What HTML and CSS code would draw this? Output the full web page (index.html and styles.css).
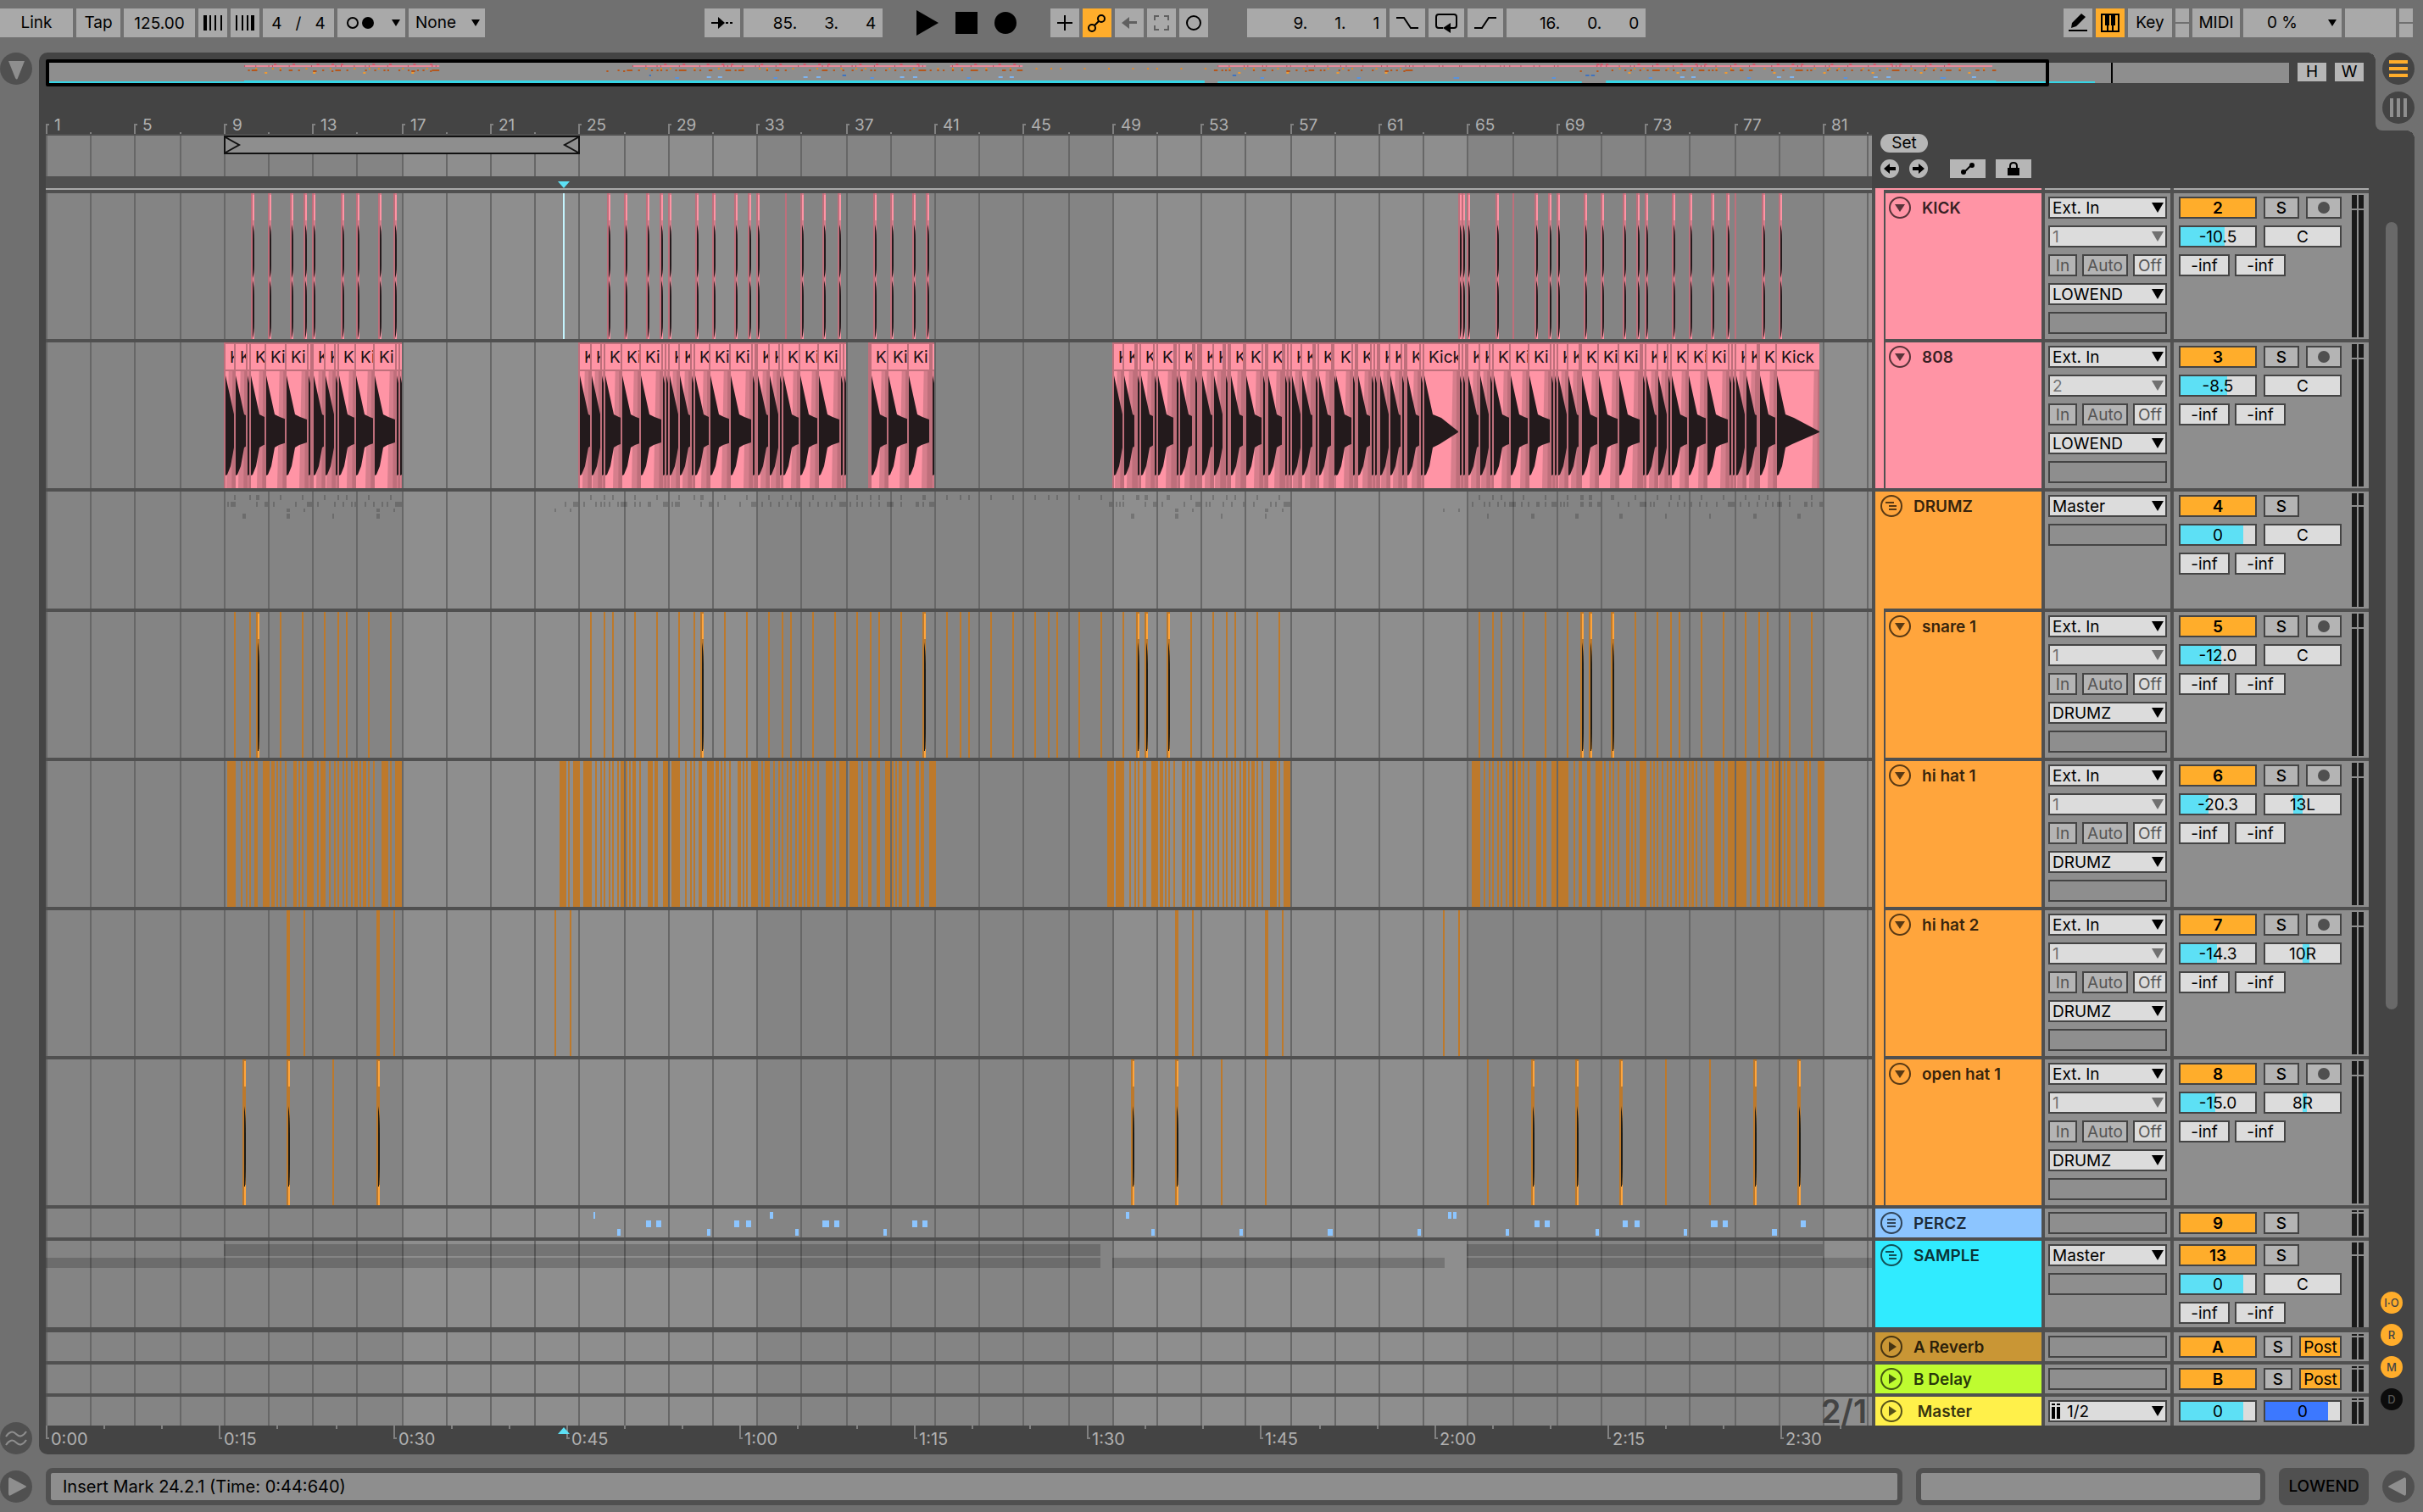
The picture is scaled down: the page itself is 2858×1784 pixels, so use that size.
FILE: index.html
```html
<!DOCTYPE html>
<html lang="en">
<head>
    <meta charset="UTF-8">
    <title>Arrangement</title>
    <link rel="stylesheet" href="styles.css">
</head>
<body>
    <header class="toolbar">
        <div class="group">
            <button class="btn w86">Link</button>
            <button class="btn w52">Tap</button>
            <input class="btn w84" value="125.00" aria-label="Tempo">
            <button class="btn w34" aria-label="Nudge down"><svg width="24" height="18"><path d="M1 0h4v18H1zM8 0h2v18H8zM14 0h2v18h-2zM21 0h2v18h-2z"/></svg></button>
            <button class="btn w34" aria-label="Nudge up"><svg width="24" height="18"><path d="M1 0h2v18H1zM8 0h2v18H8zM14 0h2v18h-2zM19 0h4v18h-4z"/></svg></button>
            <input class="btn w84" value="4   /   4" aria-label="Time signature">
            <button class="btn w80 metro" aria-label="Metronome"><svg width="34" height="18"><circle cx="8" cy="9" r="6" fill="none" stroke="#000" stroke-width="2"/><circle cx="26" cy="9" r="7"/></svg><i class="arrow"></i></button>
            <span class="drop w90"><select class="btn" aria-label="Quantization"><option>None</option></select></span>
        </div>
        <div class="space-a"></div>
        <div class="group">
            <button class="btn w42" aria-label="Follow"><svg width="26" height="18"><path d="M0 8h8V2l8 7-8 7v-6H0zM17 8h3v2h-3zM22 8h3v2h-3z"/></svg></button>
            <input class="btn w164 pos" value="85.      3.      4" aria-label="Position">
        </div>
        <div class="group transport">
            <button aria-label="Play"><svg width="26" height="30"><path d="M0 0l26 15L0 30z"/></svg></button>
            <button aria-label="Stop"><svg width="26" height="26"><path d="M0 0h26v26H0z"/></svg></button>
            <button aria-label="Record"><svg width="26" height="26"><circle cx="13" cy="13" r="13"/></svg></button>
        </div>
        <div class="group">
            <button class="btn w34" aria-label="Overdub"><svg width="18" height="18"><path d="M8 0h2v8h8v2h-8v8H8v-8H0V8h8z"/></svg></button>
            <button class="btn w34 on" aria-label="Automation arm"><svg width="24" height="24" fill="none" stroke="#000" stroke-width="2"><circle cx="17" cy="7" r="4"/><circle cx="6" cy="18" r="4"/><path d="M9 15l5-5"/></svg></button>
            <button class="btn w34" aria-label="Re-enable automation"><svg width="18" height="16" fill="#606060"><path d="M0 8l9-7v5h9v3H9v6z"/></svg></button>
            <button class="btn w34" aria-label="Capture"><svg width="18" height="18" fill="none" stroke="#606060" stroke-width="2"><path d="M1 6V1h5M12 1h5v5M17 12v5h-5M6 17H1v-5"/></svg></button>
            <button class="btn w34" aria-label="Session record"><svg width="20" height="20"><circle cx="10" cy="10" r="8" fill="none" stroke="#000" stroke-width="2"/></svg></button>
        </div>
        <div class="group loop">
            <input class="btn w164 pos" value="9.      1.      1" aria-label="Loop start">
            <button class="btn w42" aria-label="Punch in"><svg width="28" height="16" fill="none" stroke="#000" stroke-width="2"><path d="M1 2h9l8 12h9"/></svg></button>
            <button class="btn w42" aria-label="Loop"><svg width="28" height="24"><path d="M10 18H5q-3 0-3-3V5q0-3 3-3h18q3 0 3 3v10q0 3-3 3h-5" fill="none" stroke="#000" stroke-width="2"/><path d="M10 18l9-6v12z"/></svg></button>
            <button class="btn w42" aria-label="Punch out"><svg width="28" height="16" fill="none" stroke="#000" stroke-width="2"><path d="M1 14h9l8-12h9"/></svg></button>
            <input class="btn w164 pos" value="16.      0.      0" aria-label="Loop length">
        </div>
        <div class="space-b"></div>
        <div class="group">
            <button class="btn w34" aria-label="Draw mode"><svg width="24" height="22"><path d="M4 17l1-6L16 0l5 4L10 15zM1 19h22v2H1z"/></svg></button>
            <button class="btn w34 on" aria-label="Computer keyboard"><svg width="24" height="24"><path d="M2 2h20v20H2z" fill="none" stroke="#000" stroke-width="2"/><path d="M6 2h5v13H6zM13 2h5v13h-5zM8 14h2v8H8zM14 14h2v8h-2z"/></svg></button>
            <button class="btn w52">Key</button>
            <span class="leds"><i></i><i></i></span>
            <button class="btn w56">MIDI</button>
            <button class="btn w116 cpu">0 %<i class="arrow"></i></button>
            <span class="btn w60"></span>
            <span class="leds"><i></i><i></i></span>
        </div>
    </header>

    <main class="main">
        <nav class="rail">
            <button class="round" aria-label="Show browser"><svg width="38" height="38"><path d="M10 10h19l-8 20q-1 3-3 0z"/></svg></button>
            <button class="round" aria-label="Groove pool"><svg width="38" height="38" fill="none" stroke="#8e8e8e" stroke-width="2"><path d="M7 17q6-9 12-3t12-3M7 27q6-9 12-3t12-3"/></svg></button>
        </nav>

        <div class="workspace">
            <div class="arrange">
                <div class="overview-row">
                    <div class="overview">
                        <svg id="overview" viewBox="0 0 2646 24" preserveAspectRatio="none"></svg>
                        <div class="frame"></div>
                    </div>
                    <button class="small w34">H</button>
                    <button class="small w34">W</button>
                </div>

                <div class="head-row">
                    <div>
                        <div class="ruler" id="ruler"></div>
                        <div class="scrub lane" id="scrub">
                            <svg class="brace" viewBox="0 0 420 22" preserveAspectRatio="none"><path d="M1 1h418v20H1zM2 2l16 9-16 9M418 2l-16 9 16 9"/></svg>
                        </div>
                        <div class="marker-bar"><i class="marker"></i></div>
                    </div>
                    <div class="locators">
                        <button class="small set">Set</button>
                        <div class="locator-row">
                            <button class="small dot" aria-label="Previous locator"><svg width="16" height="14"><path d="M1 7l7-6v4h7v4H8v4z"/></svg></button>
                            <button class="small dot" aria-label="Next locator"><svg width="16" height="14"><path d="M15 7L8 1v4H1v4h7v4z"/></svg></button>
                            <button class="small w42" aria-label="Automation mode"><svg width="18" height="16"><path d="M5 12l8-8" stroke="#000" stroke-width="2"/><circle cx="4" cy="12" r="3"/><circle cx="14" cy="4" r="3"/></svg></button>
                            <button class="small w42" aria-label="Lock envelopes"><svg width="16" height="16"><path d="M1 7h14v9H1z"/><path d="M4 8V5q0-4 4-4t4 4v3" fill="none" stroke="#000" stroke-width="2"/></svg></button>
                        </div>
                    </div>
                </div>

                <div class="tracks" id="tracks">
                    <div class="track edge">
                        <div class="lane"></div>
                        <div class="edge-head"></div>
                        <div></div>
                        <div></div>
                    </div>
                </div>

                <div class="time-ruler" id="times"><i class="marker up"></i></div>
            </div>

            <aside class="side">
                <div class="thumb"></div>
                <div class="gap"></div>
                <button class="chip">I·O</button>
                <button class="chip">R</button>
                <button class="chip">M</button>
                <button class="chip off">D</button>
            </aside>

            <div class="tabs">
                <button class="round" aria-label="Arrangement view"><svg width="38" height="38" fill="#ffad2b"><path d="M8 9h22v4H8zM8 17h22v4H8zM8 25h22v4H8z"/></svg></button>
                <button class="round" aria-label="Session view"><svg width="38" height="38"><path d="M9 8h4v22H9zM17 8h4v22h-4zM25 8h4v22h-4z"/></svg></button>
            </div>
        </div>
    </main>

    <footer class="status">
        <button class="round" aria-label="Show info"><svg width="38" height="38"><path d="M10 11q0-4 3-2l17 9q2 1 0 2l-17 9q-3 2-3-2z"/></svg></button>
        <div class="info">Insert Mark 24.2.1 (Time: 0:44:640)</div>
        <div class="info clip-view"></div>
        <button class="device">LOWEND</button>
        <button class="round" aria-label="Show devices"><svg width="38" height="38"><path d="M28 11q0-4-3-2L8 18q-2 1 0 2l17 9q3 2 3-2z"/></svg></button>
    </footer>
    <script src="script.js"></script>
</body>
</html>
```
FILE: styles.css
```css
* {
    box-sizing: border-box;
}
body {
    margin: 0;
    background: #707070;
    color: #000;
    font: 19px/24px Inter, "Liberation Sans", sans-serif;
}
button, input, select {
    margin: 0;
    padding: 0;
    border: 0;
    border-radius: 0;
    font: inherit;
    color: inherit;
    appearance: none;
}
button {
    display: flex;
    align-items: center;
    justify-content: center;
    background: none;
    cursor: pointer;
}
svg {
    display: block;
}

/* toolbar */
.toolbar {
    display: flex;
    height: 62px;
    padding: 10px 12px 0 0;
}
.group {
    display: flex;
    gap: 4px;
    height: 34px;
}
.space-a {
    flex: 10;
}
.space-b {
    flex: 19;
}
.btn {
    height: 34px;
    background: #a9a9a9;
    text-align: center;
}
.btn.on {
    background: #ffad2b;
}
.w34 { width: 34px; }
.w42 { width: 42px; }
.w52 { width: 52px; }
.w54 { width: 54px; }
.w40 { width: 40px; }
.w50 { width: 50px; }
.w56 { width: 56px; }
.w60 { width: 60px; }
.w80 { width: 80px; }
.w84 { width: 84px; }
.w86 { width: 86px; }
.w90 { width: 90px; }
.w92 { width: 92px; }
.w116 { width: 116px; }
.w164 { width: 164px; }
.pos {
    padding-right: 8px;
    text-align: right;
}
.arrow {
    width: 10px;
    height: 8px;
    background: #000;
    clip-path: polygon(0 0, 100% 0, 50% 100%);
}
.metro {
    justify-content: space-between;
    padding: 0 6px 0 10px;
}
.cpu {
    justify-content: flex-end;
    gap: 36px;
    padding-right: 6px;
}
.drop {
    position: relative;
}
.drop select {
    width: 100%;
    padding-left: 8px;
    text-align: left;
}
.drop::after {
    content: "";
    position: absolute;
    right: 6px;
    top: 13px;
    width: 10px;
    height: 8px;
    background: #000;
    clip-path: polygon(0 0, 100% 0, 50% 100%);
    pointer-events: none;
}
.transport {
    gap: 20px;
    margin: 0 40px;
}
.loop {
    margin-left: 46px;
}
.leds {
    display: flex;
    flex-direction: column;
    gap: 2px;
    width: 16px;
    height: 34px;
}
.leds i {
    flex: 1;
    background: #a9a9a9;
}

/* frame */
.main {
    display: flex;
    padding-right: 10px;
}
.rail {
    display: flex;
    flex-direction: column;
    justify-content: space-between;
    width: 46px;
}
.round {
    flex: none;
    width: 38px;
    height: 38px;
    border-radius: 50%;
    background: #505050;
}
.round svg {
    fill: #8e8e8e;
}
.round svg[fill] {
    fill: none;
}
.tabs .round:first-child svg {
    fill: #ffad2b;
}
.workspace {
    position: relative;
    display: flex;
    flex: 1;
    min-width: 0;
    padding-left: 8px;
    border-radius: 10px;
    background: #444;
}
.arrange {
    flex: 1;
    min-width: 0;
}
.tabs {
    position: absolute;
    top: 0;
    right: 0;
    display: flex;
    flex-direction: column;
    align-items: flex-end;
    gap: 8px;
    width: 46px;
    height: 92px;
    border-bottom-left-radius: 8px;
    background: #707070;
}
.tabs .round {
    background: #444;
}
.tabs::before, .tabs::after {
    content: "";
    position: absolute;
    width: 10px;
    height: 10px;
    background: radial-gradient(circle at 0 100%, #444 10px, #707070 10px);
}
.tabs::before {
    top: 0;
    left: -10px;
}
.tabs::after {
    top: 100%;
    right: 0;
}
.side {
    display: flex;
    flex-direction: column;
    align-items: center;
    gap: 12px;
    width: 54px;
    padding: 200px 0 52px;
}
.thumb {
    flex: 3;
    width: 14px;
    border-radius: 7px;
    background: #696969;
}
.gap {
    flex: 1;
}
.chip {
    width: 26px;
    height: 26px;
    border-radius: 13px;
    background: #ffad2b;
    color: #444;
    font-size: 13px;
    font-weight: 500;
}
.chip.off {
    background: #0c0c0c;
    color: #555;
}

/* overview */
.overview-row {
    display: flex;
    gap: 10px;
    padding: 8px 6px 32px 0;
}
.overview {
    position: relative;
    flex: 1;
    height: 32px;
    padding: 4px 0;
}
.overview svg {
    width: 100%;
    height: 24px;
    background: #8e8e8e;
}
.frame {
    position: absolute;
    top: 0;
    left: 0;
    width: 89.3%;
    height: 32px;
    border: 4px solid #000;
    border-radius: 2px;
}
.small {
    height: 22px;
    background: #b6b6b6;
    font-size: 19px;
}
.overview-row .small {
    margin-top: 4px;
}

/* rulers */
.head-row {
    display: grid;
    grid-template-columns: 1fr 582px;
    column-gap: 4px;
}
.ruler, .time-ruler {
    position: relative;
    color: #b0b0b0;
}
.ruler {
    height: 26px;
    border-bottom: 2px solid #505050;
}
.time-ruler {
    height: 34px;
    margin-right: 586px;
}
.ruler svg, .time-ruler svg {
    width: 100%;
    height: 100%;
}
.ruler span {
    position: absolute;
    top: 2px;
    padding-left: 10px;
}
.time-ruler span {
    position: absolute;
    top: 4px;
    padding-left: 6px;
    font-size: 20px;
}
.scrub {
    height: 48px;
}
.brace {
    position: absolute;
    top: 0;
    left: 9.75%;
    width: 19.5%;
    height: 22px;
    background: #8e8e8e;
}
.brace path {
    fill: none;
    stroke: #111;
    stroke-width: 2;
}
.marker-bar {
    position: relative;
    height: 14px;
    background: #505050;
}
.marker {
    position: absolute;
    bottom: 0;
    left: 28.04%;
    width: 14px;
    height: 8px;
    background: #5de0f5;
    clip-path: polygon(0 0, 100% 0, 50% 100%);
}
.marker.up {
    top: 2px;
    clip-path: polygon(50% 0, 100% 100%, 0 100%);
}
.locators {
    padding: 24px 0 0 6px;
}
.set {
    width: 56px;
    border-radius: 11px;
}
.locator-row {
    display: flex;
    gap: 12px;
    margin-top: 8px;
}
.dot {
    width: 22px;
    border-radius: 11px;
}
.dot + .w42 {
    margin-left: 14px;
}

/* tracks */
.tracks {
    display: grid;
    gap: 4px;
    background: #505050;
}
.track {
    display: grid;
    grid-template-columns: 1fr 196px 148px 230px;
    grid-template-rows: 100%;
    column-gap: 4px;
    height: 172px;
    background: #505050;
}
.track > div {
    background: #8e8e8e;
}
.track.edge {
    height: 2px;
}
.track.edge > div {
    background: #a9a9a9;
}
.track.edge .edge-head {
    background: #ff94a5;
}
.track.group-track { height: 138px; }
.track.sample { height: 102px; }
.track.short { height: 34px; }
.track.first-return { margin-top: 2px; }
.lane {
    position: relative;
    overflow: hidden;
    min-width: 0;
}
.lane .grid {
    position: absolute;
    top: 0;
    left: 0;
    width: 100%;
    height: 100%;
}
.clip-name {
    position: absolute;
    top: 2px;
    height: 30px;
    padding-left: 5px;
    overflow: hidden;
    line-height: 32px;
    color: #1a1013;
    white-space: nowrap;
}
.cursor {
    position: absolute;
    top: 0;
    left: 28.32%;
    width: 2px;
    height: 100%;
    background: #c5f5ff;
}
.zoom-grid {
    position: absolute;
    right: 6px;
    bottom: 0;
    color: #444;
    font-size: 38px;
    line-height: 34px;
    font-weight: 600;
}
.track > .head {
    position: relative;
    display: flex;
    gap: 13px;
    padding: 4px 6px 2px;
    background: var(--color);
    font-weight: 600;
    line-height: 28px;
    color: rgba(0, 0, 0, .8);
}
.head.nested {
    padding-left: 16px;
}
.head.nested::before {
    content: "";
    position: absolute;
    top: -4px;
    bottom: 0;
    left: 0;
    width: 10px;
    border-right: 2px solid #505050;
    background: var(--color);
}
.head svg {
    opacity: .65;
}
.io {
    padding: 4px;
}
.io, .mixer-rows {
    display: flex;
    flex-direction: column;
    gap: 8px;
}
.line {
    display: flex;
    gap: 6px;
}
.wide {
    gap: 8px;
}
.ctl, .field select, .empty {
    display: block;
    height: 26px;
    padding-top: 1px;
    border: 2px solid #444;
    background: #dcdcdc;
    line-height: 22px;
    text-align: center;
}
.field {
    position: relative;
    display: block;
}
.field select {
    width: 100%;
    padding-left: 3px;
    text-align: left;
}
.field::after {
    content: "";
    position: absolute;
    top: 7px;
    right: 4px;
    width: 14px;
    height: 12px;
    background: #000;
    clip-path: polygon(0 0, 100% 0, 50% 100%);
    pointer-events: none;
}
.field.dim select {
    color: #707070;
}
.field.dim::after {
    background: #707070;
}
.field.stereo select {
    padding-left: 20px;
}
.field.stereo svg {
    position: absolute;
    top: 4px;
    left: 4px;
}
.field select, .empty {
    flex: none;
}
.empty {
    background: none;
}
.grey {
    background: #b4b4b4;
}
.faint {
    color: #555;
}
.number {
    background: #ffad2b;
    font-weight: 600;
}
.solo {
    font-weight: 500;
}
.post {
    background: #ffad2b;
    white-space: nowrap;
    overflow: hidden;
}
.arm {
    padding-top: 0;
}
.arm::before {
    content: "";
    display: block;
    width: 14px;
    height: 14px;
    margin: 0 auto;
    border-radius: 50%;
    background: #505050;
}
.level {
    background: linear-gradient(90deg, #dcdcdc var(--from), #5de0f5 var(--from), #5de0f5 var(--to), #dcdcdc var(--to));
}
.level.cue {
    background: linear-gradient(90deg, #3c78ff var(--to), #dcdcdc var(--to));
}
.mixer {
    display: flex;
    justify-content: space-between;
    padding: 4px 6px;
}
.meters {
    display: grid;
    grid-template-columns: 6px 6px;
    grid-template-rows: 16px 1fr;
    gap: 2px;
    margin: -2px 0;
}
.meters i {
    background: #191919;
}
.group-track .meters, .sample .meters {
    grid-template-rows: 14px 1fr;
}
.sample .meters {
    margin-bottom: -4px;
}
.short .meters {
    grid-template-rows: 2px 1fr;
}

/* bottom bar */
.status {
    display: flex;
    align-items: center;
    gap: 16px;
    height: 68px;
    padding: 8px 10px 0 0;
}
.info {
    flex: 1;
    height: 44px;
    padding-left: 14px;
    border: 6px solid #505050;
    border-radius: 8px;
    background: #8e8e8e;
    font-size: 20px;
    line-height: 32px;
}
.clip-view {
    flex: 0 0 412px;
}
.device {
    width: 106px;
    height: 44px;
    border-radius: 8px;
    background: #505050;
    font-weight: 500;
}
```
FILE: script.js
```js
var WIDTH = 2154;        // units across the visible part of the timeline
var BAR = 26.2;
var LOOK = 1.0956;       // overview units per timeline unit

// "start:width", width defaults to 2, "f" marks a clip long enough to show its audio
var kick = "242f 262f 288f 304f 314f 348f 366f 392f 410f 662f 682f 708f 724f 734f 766f 786f 812f 828f 838f 872 890f 916f 934f 976f 996f 1022f 1038f " +
    "1666f 1670f 1676f 1710f 1730 1756f 1772f 1782f 1814f 1834f 1860f 1876f 1886f 1918f 1938f 1964f 1982f 1992 2024f 2044f";
var snare = "222 240 248f 276 302 328 344 354 380 406 642 658 668 694 720 746 764 772f 800 826 852 868 878 904 930 956 972 982 1008 1034f " +
    "1062 1078 1088 1114 1140 1166 1182 1192 1218 1244 1270 1286f 1296f 1322f 1350 1376 1392 1402 1428 1454 " +
    "1690 1706 1716 1742 1768 1794 1810f 1820f 1846f 1874 1900 1916 1926 1952 1978 2004 2020 2030 2056 2082";
var hat1 = "214:10 230 236 240 246:4 256:8 266:4 272 276 282 292:4 298 302 308:8 320 324:6 334 340 344 350 354 360 364:4 370 374:4 380 386 396:8 406 412:8 " +
    "606:8 616 622:8 634:10 648 654 658 664 668 674 678:4 684 688 692:4 700 710:6 718:4 728:6 738:10 754 760 764 770:4 780:8 790:4 796 800 806 816:4 822 826 832:8 " +
    "844 848:6 858 864 868 874 878 884 888:4 894 898:4 904 910 920:8 930 936:8 948:10 962 970:4 980:4 990:6 998 1002 1006:4 1016 1026:4 1032:4 1042:8 " +
    "1252:8 1262:10 1278 1284 1288 1294:4 1304:8 1314:4 1320 1324 1330 1340:4 1346 1350 1356:8 1368 1372 1376 1382 1388 1392 1398 1402 1408 1412:4 1418 1422:4 1428 1434 1444:8 1454 1460:8 " +
    "1682:10 1696 1702 1706 1712 1716 1722 1726:4 1732 1736:4 1742 1748 1758:6 1766:4 1776:6 1784:12 1802 1808:4 1818:4 1828:8 1838 1844 1848 1854 1864:4 1870 1874 1880:8 " +
    "1892 1896 1900 1906 1912 1916 1922 1926 1932:4 1938 1941:3 1946 1952 1958 1968:8 1978 1984:8 1994:12 2010 2018:4 2028:4 2036 2040:4 2046 2050 2054:4 2064 2074:4 2080 2090:8";
var hat2 = "284:4 304 390:4 410 600 618 1332:4 1352 1438:4 1458 1648 1666";
var open1 = "232f 284f 338 390f 1280f 1332f 1386 1438 1700 1752f 1804f 1856f 1910 1962 2014f 2066f";
var hatGroup = "214 218:6 248 258:4 268 294 308:6 320 340 350 360 364 376 386 396 402 412:8 612 622:6 634 648 654 658 664 674 678:8 694 700 710:4 728:6 738 742:6 772 782:4 792 " +
    "818 832:6 844 854 864 874 884 888 900 910 920 926 936:8 948 956 962 972 982 992:8 1008 1026:4 1034 1042:6 1254:4 1262 1266 1270 1296 1306:4 1316 1342 1356:6 1368 1372 " +
    "1388 1398 1412 1424 1444 1450 1460:8 1682 1696 1702 1712 1720 1726:8 1740 1748 1758:4 1768 1776:6 1786 1790 1794 1810:4 1820:4 1830:4 1854 1866 1880:8 1892 1896 1914 1924 " +
    "1932 1940 1950 1958 1970 1984:8 1998 2008 2018 2028 2036 2042:6 2056 2074:4 2082 2092:4";
var perc = [
    "646 854:4 1274:4 1654:4 1660:4",
    "708:6 720:6 812:6 826:6 916:8 930:6 1022:6 1034:6 1756:6 1768:6 1860:6 1874:6 1964:8 1978:6 2070:6",
    "674:4 780:4 884:4 988:4 1304:4 1408:4 1512:6 1618:4 1722:4 1828:4 1932:4 2036:6"
];
var bassAreas = "210:210 628:316 970:78 1258:834";
var bass = "210:12 222:14 236:4 240:18 258:24 282:26 308:4 314:14 328:12 340:4 344:20 364:22 386:26 412:4 416:4 " +
    "628:14 642:12 654:4 658:20 678:22 700:26 726:4 730:4 734:12 746:14 760:4 764:18 782:24 806:26 832:4 838:14 852:12 864:4 868:20 888:22 910:26 936:4 940:4 " +
    "972:20 992:24 1016:26 1044:4 1258:12 1270:14 1286:4 1290:16 1306:4 1310:20 1332:4 1336:16 1354:4 1362:14 1376:12 1390:4 1396:16 1414:20 1434:4 1440:18 1460:4 1464:4 1468:12 1480:14 1496:4 1500:16 " +
    "1518:4 1520:20 1540:4 1546:16 1562:4 1566:4 1572:12 1584:14 1598:4 1604:16 1620:4 1624:42 1666:4 1670:4 1676:14 1690:12 1702:4 1706:20 1726:22 1748:26 1774:4 1778:4 1782:12 1794:14 1810:20 1830:24 1854:26 " +
    "1882:4 1886:14 1900:12 1912:4 1916:20 1936:22 1958:26 1984:4 1988:4 1992:12 2004:14 2020:20 2040:52";
var sample = ["210:1034 1676:420", "0:1244 1258:392 1676:478"];

function parse(text) {
    return text.split(" ").map(function (item) {
        var p = item.split(":");
        var full = item.indexOf("f") > 0;
        return {x: parseInt(p[0]), w: full ? 4 : parseInt(p[1] || 2), full: full};
    });
}

function rect(x, y, w, h, color) {
    return '<rect x="' + x + '" y="' + y + '" width="' + w + '" height="' + h + '" fill="' + color + '"/>';
}

function bars(text, y, h, color) {
    return parse(text).map(function (c) {
        return rect(c.x, y, c.w, h, color);
    }).join("");
}

function snap(x) {
    return Math.round(x / 2) * 2;
}

function gridSvg(height, content) {
    var s = "";
    for (var i = 0; i < 6; i++) {
        var start = snap(i * 16 * BAR);
        s += rect(start, 0, Math.min(WIDTH - start, 420), height, i % 2 ? "#8e8e8e" : "#848484");
    }
    for (var k = 0; k < 42; k++) {
        s += rect(snap(k * 2 * BAR), 0, 2, height, "#676767");
    }
    return '<svg class="grid" viewBox="0 0 ' + WIDTH + ' ' + height + '" preserveAspectRatio="none" shape-rendering="crispEdges">' + s + (content || "") + '</svg>';
}

function kickClips() {
    return parse(kick).map(function (c) {
        var x = c.x;
        var s = rect(x, 0, 2, 172, "#be6f7b");
        if (!c.full) return s;
        s += rect(x + 2, 0, 2, 172, "#d67e8c") + rect(x + 2, 2, 2, 30, "#ff94a5") + rect(x + 2, 160, 2, 12, "#ff94a5");
        s += '<path fill="#231a1c" shape-rendering="auto" d="M' + (x + 2) + ' 37q2 6 2 18v30q0 10-2 15zM' + (x + 2) + ' 103q2 6 2 18v30q0 14-2 20z"/>';
        return s;
    }).join("");
}

function drumClips(text, from, to) {
    return parse(text).map(function (c) {
        if (!c.full) return rect(c.x, 0, c.w, 172, "#bd792b");
        var x = c.x + 2;
        return rect(c.x, 0, 4, 172, "#bd792b") + rect(x, 2, 2, 30, "#ffa53c") + rect(x, to - 2, 2, 174 - to, "#ffa53c") +
            '<path fill="#1c1a14" shape-rendering="auto" d="M' + x + ' ' + from + 'q2 10 2 34V' + (to - 30) + 'q0 20-1 30h-1z"/>';
    }).join("");
}

// upper and lower outline of the bass hit, cut at the end of the clip
function bassShape(x, w) {
    var top = [[0, 39], [5, 62], [10, 85], [16, 88], [24, 91]];
    var low = [[0, 157], [2, 156], [6, 146], [10, 124], [15, 121], [24, 118]];
    if (w >= 40) {
        top = [[0, 39], [5, 62], [10, 85], [20, 89], [w, 105]];
        low = [[0, 157], [2, 156], [6, 146], [10, 124], [18, 120], [w, 106]];
    }
    function cut(list) {
        var out = [];
        for (var i = 0; i < list.length; i++) {
            var a = list[i], b = list[i - 1];
            if (a[0] < w) {
                out.push(a);
            } else {
                out.push([w, b[1] + (a[1] - b[1]) * (w - b[0]) / (a[0] - b[0])]);
                break;
            }
        }
        return out;
    }
    return cut(top).concat(cut(low).reverse()).map(function (p) {
        return (x + p[0]) + "," + p[1];
    }).join(" ");
}

function bassClips() {
    return bars(bassAreas, 0, 172, "#be6f7b") + parse(bass).map(function (c) {
        var x = c.x + 2, w = c.w - 2, end = x + w;
        var shade = Math.min(w, 9);
        return rect(x, 2, w, 30, "#ff94a5") + rect(x, 34, w, 138, "#ff94a5") +
            '<g shape-rendering="auto"><polygon fill="#d67e8c" points="' + (end - shade * .7) + ',34 ' + end + ',34 ' + end + ',172 ' + (end - shade) + ',172"/>' +
            '<polygon fill="#be6f7b" points="' + (end - shade * .2) + ',34 ' + end + ',34 ' + end + ',172 ' + (end - shade * .3) + ',172"/>' +
            '<polygon fill="#231a1c" points="' + bassShape(x, w) + '"/></g>';
    }).join("");
}

// narrow clips only have room for the first letters of the name
function bassNames() {
    return parse(bass).filter(function (c) {
        return c.w > 10;
    }).map(function (c) {
        var name = c.w > 40 ? "Kick" : c.w > 21 ? "Ki" : "K";
        return '<div class="clip-name" style="left:' + 100 * (c.x + 2) / WIDTH + '%;width:' + 100 * (c.w - 2) / WIDTH + '%">' + name + '</div>';
    }).join("");
}

var NOTE = "rgba(0,0,0,.18)";
var lanes = {
    kick: kickClips(),
    bass: bassClips(),
    drumz: bars(snare, 4, 6, NOTE) + bars(hatGroup, 12, 6, NOTE) + bars(hat2, 20, 4, NOTE) + bars(open1, 26, 6, NOTE),
    snare: drumClips(snare, 36, 164),
    hat1: drumClips(hat1),
    hat2: drumClips(hat2),
    open1: drumClips(open1, 55, 150),
    perc: bars(perc[0], 4, 8, "#8cc5ff") + bars(perc[1], 14, 8, "#8cc5ff") + bars(perc[2], 24, 8, "#8cc5ff"),
    sample: bars(sample[0], 4, 14, NOTE) + bars(sample[1], 20, 12, NOTE)
};

var PINK = "#ff94a5", ORANGE = "#ffa53c";
var tracks = [
    {name: "KICK", no: 2, lane: "kick", color: PINK, kind: "audio", input: 1, out: "LOWEND", vol: "-10.5", fill: 59, pan: "C"},
    {name: "808", no: 3, lane: "bass", color: PINK, kind: "audio", input: 2, out: "LOWEND", vol: "-8.5", fill: 63, pan: "C"},
    {name: "DRUMZ", no: 4, lane: "drumz", color: ORANGE, kind: "group", size: "group-track", h: 138},
    {name: "snare 1", no: 5, lane: "snare", color: ORANGE, kind: "audio", input: 1, out: "DRUMZ", vol: "-12.0", fill: 54, pan: "C"},
    {name: "hi hat 1", no: 6, lane: "hat1", color: ORANGE, kind: "audio", input: 1, out: "DRUMZ", vol: "-20.3", fill: 37, pan: "13L", from: 37, to: 50},
    {name: "hi hat 2", no: 7, lane: "hat2", color: ORANGE, kind: "audio", input: 1, out: "DRUMZ", vol: "-14.3", fill: 49, pan: "10R", from: 50, to: 59},
    {name: "open hat 1", no: 8, lane: "open1", color: ORANGE, kind: "audio", input: 1, out: "DRUMZ", vol: "-15.0", fill: 47, pan: "8R", from: 50, to: 56},
    {name: "PERCZ", no: 9, lane: "perc", color: "#8cc5ff", kind: "folded", size: "short", h: 34},
    {name: "SAMPLE", no: 13, lane: "sample", color: "#30ebff", kind: "group", size: "sample", h: 102},
    {name: "A Reverb", no: "A", color: "#c99635", kind: "return", size: "short first-return", h: 34},
    {name: "B Delay", no: "B", color: "#befc30", kind: "return", size: "short", h: 34},
    {name: "&nbsp;Master", color: "#fff04a", kind: "master", size: "short", h: 34}
];

var icons = {
    audio: '<path d="M7 9h12l-6 9z"/>',
    group: '<path d="M6 8h10v2H6zM10 12h9v2h-9zM10 16h9v2h-9z"/>',
    folded: '<path d="M8 8h10v2H8zM8 12h10v2H8zM8 16h10v2H8z"/>',
    "return": '<path d="M10 7v12l9-6z"/>'
};
icons.master = icons["return"];

function field(label, value, cls) {
    return '<label class="field ' + (cls || "") + '">' + (cls == "stereo" ? '<svg width="12" height="18"><path d="M0 0h4v2H0zM0 4h4v14H0zM6 0h4v2H6zM6 4h4v14H6z"/></svg>' : "") +
        '<select aria-label="' + label + '"><option>' + value + '</option></select></label>';
}

function level(label, value, from, to, cls) {
    return '<input class="ctl level w92 ' + (cls || "") + '" aria-label="' + label + '" value="' + value + '" style="--from:' + from + '%;--to:' + to + '%">';
}

function io(t) {
    if (t.kind == "audio") {
        return field(t.name + " input", "Ext. In") + field(t.name + " channel", t.input, "dim") +
            '<div class="line"><button class="ctl grey faint w34">In</button><button class="ctl grey faint w54">Auto</button><button class="ctl faint w40">Off</button></div>' +
            field(t.name + " output", t.out) + '<span class="empty"></span>';
    }
    if (t.kind == "group") return field(t.name + " output", "Master") + '<span class="empty"></span>';
    if (t.kind == "master") return field("Master output", "1/2", "stereo");
    return '<span class="empty"></span>';
}

function mixer(t) {
    if (t.kind == "master") return '<div class="line wide">' + level("Master volume", 0, 0, 84) + level("Cue volume", 0, 0, 84, "cue") + '</div>';
    var s = '<div class="line wide"><button class="ctl number w92">' + t.no + '</button>';
    if (t.kind == "return") return s + '<button class="ctl grey solo w34">S</button><button class="ctl post w50">Post</button></div>';
    s += '<button class="ctl grey solo w42">S</button>';
    if (t.kind == "audio") s += '<button class="ctl grey arm w42" aria-label="Arm ' + t.name + '"></button>';
    s += '</div>';
    if (t.kind == "folded") return s;
    return s + '<div class="line wide">' + level(t.name + " volume", t.vol || 0, 0, t.fill || 84) + level(t.name + " pan", t.pan || "C", t.from || 0, t.to || 0) + '</div>' +
        '<div class="line"><button class="ctl w60">-inf</button><button class="ctl w60">-inf</button></div>';
}

document.getElementById("tracks").innerHTML += tracks.map(function (t) {
    var extra = "";
    if (t.lane == "kick") extra = '<div class="cursor"></div>';
    if (t.lane == "bass") extra = bassNames();
    if (t.kind == "master") extra = '<div class="zoom-grid">2/1</div>';
    return '<div class="track ' + (t.size || "") + '">' +
        '<div class="lane">' + gridSvg(t.h || 172, lanes[t.lane]) + extra + '</div>' +
        '<div class="head ' + (t.kind == "audio" ? "nested" : "") + '" style="--color:' + t.color + '">' +
        '<svg width="26" height="26"><circle cx="13" cy="13" r="12" fill="none" stroke="#000" stroke-width="2"/>' + icons[t.kind] + '</svg>' + t.name + '</div>' +
        '<div class="io">' + io(t) + '</div>' +
        '<div class="mixer"><div class="mixer-rows">' + mixer(t) + '</div><div class="meters"><i></i><i></i><i></i><i></i></div></div>' +
        '</div>';
}).join("");

document.getElementById("scrub").insertAdjacentHTML("afterbegin", gridSvg(48));

// bar ruler
var ticks = "", labels = "";
for (var i = 0; i < 42; i++) {
    var x = snap(i * 2 * BAR);
    ticks += i % 2 ? rect(x, 22, 2, 2, "#808080") : rect(x, 12, 2, 12, "#808080") + rect(x, 12, 4, 2, "#808080");
    if (i % 2 == 0) labels += '<span style="left:' + 100 * x / WIDTH + '%">' + (i * 2 + 1) + '</span>';
}
document.getElementById("ruler").innerHTML = '<svg viewBox="0 0 2154 24" preserveAspectRatio="none" shape-rendering="crispEdges">' + ticks + '</svg>' + labels;

// time ruler, one tick every five seconds
ticks = "";
labels = "";
for (i = 0; i < 32; i++) {
    x = snap(i * 68.23);
    ticks += i % 3 ? rect(x, 0, 2, 4, "#808080") : rect(x, 0, 2, 16, "#808080") + rect(x, 14, 4, 2, "#808080");
    if (i % 3 == 0) {
        var sec = i * 5;
        labels += '<span style="left:' + 100 * x / WIDTH + '%">' + Math.floor(sec / 60) + ":" + ("0" + sec % 60).slice(-2) + '</span>';
    }
}
document.getElementById("times").insertAdjacentHTML("afterbegin", '<svg viewBox="0 0 2154 34" preserveAspectRatio="none" shape-rendering="crispEdges">' + ticks + '</svg>' + labels);

// overview of the whole song
function small(text, y, h, color, width) {
    return parse(text).map(function (c) {
        return rect(4 + c.x * LOOK, y, width || c.w * LOOK, h, color);
    }).join("");
}
document.getElementById("overview").innerHTML =
    small(kick, 1, 3, "#c9596c", 3) + small(bassAreas, 3, 2, "#e8899a") + small(bass, 3, 2, "#c05064", 1) +
    small(snare, 6, 2, "#e08a2c", 2) + small(hatGroup, 8, 2, "#b5561c") + small(hat2, 9, 2, "#b5561c") + small(open1, 11, 2, "#f09a30", 3) +
    small(perc[0], 14, 2, "#3f73c0") + small(perc[1], 16, 2, "#7db4f0", 5) + small(perc[2], 17, 2, "#5a93dc") +
    small(sample[0], 21, 1, "#35d5e6") + small(sample[1], 22, 2, "#35d5e6") + rect(2300, 22, 117, 2, "#35d5e6") +
    rect(2436, 0, 2, 24, "#000");
```
